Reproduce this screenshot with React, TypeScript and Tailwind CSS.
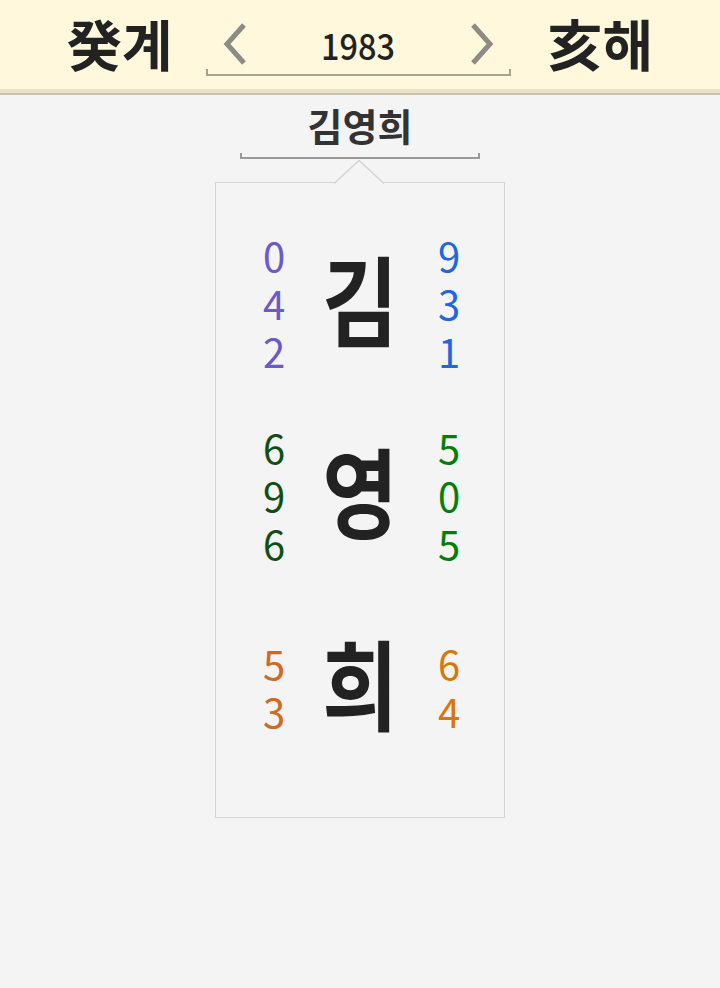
import React from 'react'

interface NameRow {
  char: string
  left: string[]
  right: string[]
  leftColor: string
  rightColor: string
}

const rows: NameRow[] = [
  { char: '김', left: ['0', '4', '2'], right: ['9', '3', '1'], leftColor: 'text-[#6a5acd]', rightColor: 'text-[#1e66e6]' },
  { char: '영', left: ['6', '9', '6'], right: ['5', '0', '5'], leftColor: 'text-[#0f4f12]', rightColor: 'text-[#008000]' },
  { char: '희', left: ['5', '3'], right: ['6', '4'], leftColor: 'text-[#d2691e]', rightColor: 'text-[#d97706]' },
]

function Chevron({ dir }: { dir: 'left' | 'right' }) {
  return (
    <svg width="26" height="42" viewBox="0 0 26 42" className="shrink-0">
      <polyline
        points={dir === 'left' ? '22,2 5,21 22,40' : '4,2 21,21 4,40'}
        fill="none"
        stroke="#8c8c84"
        strokeWidth="5"
      />
    </svg>
  )
}

function Digits({ items, color }: { items: string[]; color: string }) {
  return (
    <div className={`flex flex-col items-center text-[40px] ${color}`}>
      {items.map((d, i) => (
        <div key={i} className="h-[48px] leading-[48px]">
          {d}
        </div>
      ))}
    </div>
  )
}

export default function App() {
  return (
    <div className="min-h-screen w-[720px] bg-[#f4f4f4] font-['Noto_Sans_CJK_KR',sans-serif] text-[#222]">
      <header className="bg-[#fff8dc]">
        <div className="flex h-[89px] items-center justify-center">
          <div className="text-[55px] font-bold leading-none mr-[33px] -mt-[4px]">癸계</div>
          <div className="flex flex-col items-stretch w-[305px] pt-[10px]">
            <div className="flex items-center justify-between px-[16px]">
              <Chevron dir="left" />
              <span className="text-[36px] font-medium leading-none text-[#222] scale-x-90">1983</span>
              <Chevron dir="right" />
            </div>
            <div className="mt-[4px] h-[7px] border-x-2 border-b-2 border-[#a8a390]" />
          </div>
          <div className="text-[55px] font-bold leading-none ml-[37px] -mt-[4px]">亥해</div>
        </div>
        <div className="h-[4px] bg-[#e9e2c6]" />
        <div className="h-[2px] bg-[#cbc4ad]" />
      </header>

      <div className="flex flex-col items-center pt-[6px]">
        <div className="text-[38px] font-bold leading-[48px] text-[#333]">김영희</div>
        <div className="mt-[4px] h-[6px] w-[240px] border-x-2 border-b-2 border-[#999]" />
      </div>

      <div className="relative mx-auto mt-[23px] w-[290px] border border-[#d4d4d4] pt-[24px] pb-[34px]">
        <svg width="50" height="24" viewBox="0 0 50 24" className="absolute left-[118px] -top-[23px]">
          <polygon points="0,23.5 25,0.5 50,23.5" fill="#f4f4f4" />
          <polyline points="0,23.5 25,0.5 50,23.5" fill="none" stroke="#d4d4d4" strokeWidth="1.5" />
        </svg>
        {rows.map((row) => (
          <div key={row.char} className="grid h-[192px] grid-cols-[116px_56px_116px] items-center">
            <Digits items={row.left} color={row.leftColor} />
            <div className="flex justify-center mb-[14px]">
              <span className="inline-block whitespace-nowrap text-[98px] font-bold leading-none scale-x-[0.84]">
                {row.char}
              </span>
            </div>
            <div className="pl-[6px]">
              <Digits items={row.right} color={row.rightColor} />
            </div>
          </div>
        ))}
      </div>
    </div>
  )
}
